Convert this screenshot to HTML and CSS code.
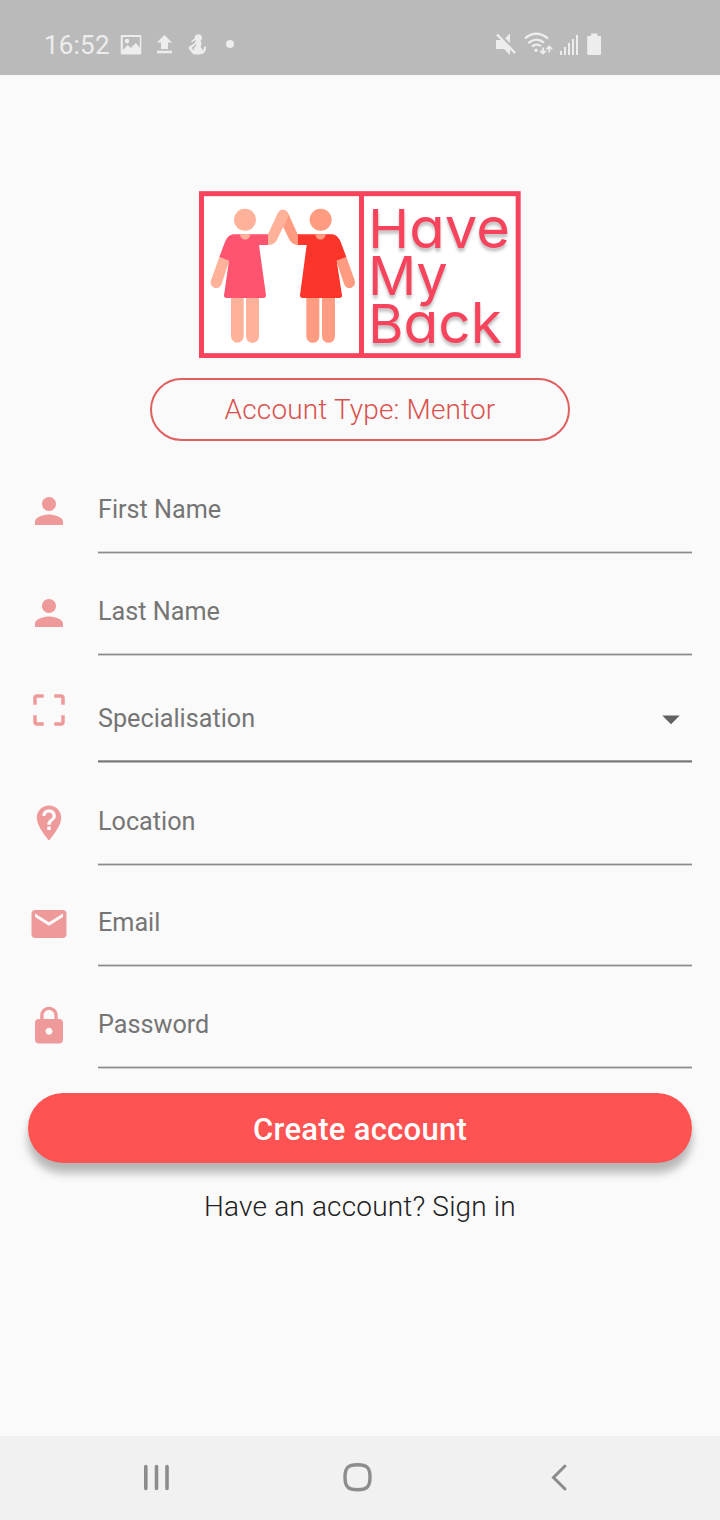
FILE: index.html
```html
<!DOCTYPE html>
<html lang="en">
<head>
  <meta charset="UTF-8" />
  <meta name="viewport" content="width=device-width, initial-scale=1.0"/>
  <title>Have My Back - Create account</title>
  <link rel="stylesheet" href="styles.css">
</head>
<body>
  <div class="screen">
    <header class="status-bar">
      <div class="status-left">
        <span class="time">16:52</span>
        <svg class="notifications" width="116" height="24" viewBox="0 0 116 24">
          <path fill-rule="evenodd" d="M2 3h18q1.300 0 1.300 1.300v17q0 1.300-1.300 1.300H2q-1.300 0-1.300-1.300v-17Q.7 3 2 3zm.8 2v13l5-5 3 3 5-5 4 4.500V5zM7 6.800a2.300 2.300 0 1 1 0 4.600 2.300 2.300 0 0 1 0-4.600z"/>
          <path d="M44.500 3l7.500 7.500h-4V17h-7v-6.500h-4zM37 18.800h15v2.400H37z"/>
          <circle cx="78.300" cy="5.800" r="3.600"/>
          <path d="M75.500 9q3-1 5.500.5 1.500 3-.4 5.500 2 1.500 1.400 3.800 2-.8 2.200-4.300h1.800q.5 8-7.500 8h-3.500q-2.500-.4-3.500-2.300l-3-4 .7-1.700 5.300-3.200.8 1.600-3.500 2.700 1.700 3.200q.3-3.500 3-5.500L74.500 11z"/>
          <path d="M71 9.300l4.500-3.500 1 1.500-4.500 3z"/>
          <circle cx="110" cy="12" r="4"/>
        </svg>
      </div>
      <svg class="system" width="108" height="26" viewBox="0 0 108 26">
        <path d="M1 9h5.500l8.500 9v6l-6-6H1zM15 2.500v9.500l-4.800-4.800z"/>
        <path class="line" stroke-width="2.400" d="M2 3.500l18 18.500"/>
        <path class="line" stroke-width="2.300" d="M30 7.500Q41-2 53 7.500M33.300 12q8-6.500 15.700-.3M37 15.500q4.500-3.500 9-.5"/>
        <circle cx="41" cy="19.200" r="1.700"/>
        <path class="line" stroke-width="1.800" d="M48 16.500v6m-2.800-2.800L48 22.500l2.800-2.800M54.300 21.500v-6M51.500 18.200l2.800-2.800 2.800 2.800"/>
        <path d="M65 20h2v4h-2zM69 16h2v8h-2zM73 12h2v12h-2zM77 8h2v16h-2zM81 4h2v20h-2z"/>
        <path d="M96 2.500h6.500V5h3.500v18q0 1-1 1H93.200q-1 0-1-1V5H96z"/>
      </svg>
    </header>

    <main class="content">
      <svg class="logo" viewBox="27 18 966 501">
        <rect class="logo-frame" x="34.500" y="26" width="950" height="486"/>
        <path class="logo-frame" d="M514.500 26v486"/>
        <g fill="#ff9b80">
          <circle cx="392" cy="104" r="33"/>
          <path d="M349 330h39v124a19.500 19.500 0 0 1-39 0zM396 330h39v124a19.500 19.500 0 0 1-39 0z"/>
          <path d="M469 216l25 70a16 16 0 0 1-31 13l-24-72z"/>
          <path d="M326 148h-3l-28-62q-7-13-18-12l-6 34 28 58q8 14 27 14z"/>
        </g>
        <path fill="#fb3529" d="M428 148H324v32h26l-20 151q0 8 8 8h110q9 0 8-8l-16-104 29-11-18-48q-9-18-23-20z"/>
        <path fill="#ff9b80" d="M376 148h31a15.500 15.500 0 0 1-31 0z"/>
        <g fill="#ffb199">
          <circle cx="165" cy="104" r="33"/>
          <path d="M123 330h38v124a19 19 0 0 1-38 0zM168 330h39v124a19.500 19.500 0 0 1-39 0z"/>
          <path d="M88 216L63 286a16 16 0 0 0 31 13l24-72z"/>
          <path d="M232 148h2l28-61q6-14 19-13 19 5 12 24l-34 70q-8 12-27 12z"/>
        </g>
        <path fill="#ff5470" d="M130 148H234v32h-27l21 151q0 8-8 8H110q-9 0-8-8l15-104-29-11 18-48q8-18 24-20z"/>
        <path fill="#ffb199" d="M150 148h31a15.500 15.500 0 0 1-31 0z"/>
        <g class="logo-text">
          <text x="535" y="188" textLength="425" lengthAdjust="spacingAndGlyphs">H<tspan class="lower">ave</tspan></text>
          <text x="535" y="330" textLength="238" lengthAdjust="spacingAndGlyphs">M<tspan class="lower">y</tspan></text>
          <text x="535" y="473" textLength="401" lengthAdjust="spacingAndGlyphs">B<tspan class="lower">ack</tspan></text>
        </g>
      </svg>

      <div class="account-type">Account Type: Mentor</div>

      <form class="form">
        <label class="field">
          <svg class="icon" viewBox="0 0 24 24"><path d="M12 12c2.210 0 4-1.790 4-4s-1.790-4-4-4-4 1.790-4 4 1.790 4 4 4zm0 2c-2.670 0-8 1.340-8 4v2h16v-2c0-2.660-5.330-4-8-4z"/></svg>
          <span class="input">First Name</span>
        </label>
        <label class="field">
          <svg class="icon" viewBox="0 0 24 24"><path d="M12 12c2.210 0 4-1.790 4-4s-1.790-4-4-4-4 1.790-4 4 1.790 4 4 4zm0 2c-2.670 0-8 1.340-8 4v2h16v-2c0-2.660-5.330-4-8-4z"/></svg>
          <span class="input">Last Name</span>
        </label>
        <label class="field field-select">
          <svg class="icon" viewBox="0 0 24 24"><path d="M3 5v4h2V5h4V3H5c-1.100 0-2 .9-2 2zm2 10H3v4c0 1.100.9 2 2 2h4v-2H5v-4zm14 4h-4v2h4c1.100 0 2-.9 2-2v-4h-2v4zm0-16h-4v2h4v4h2V5c0-1.100-.9-2-2-2z"/></svg>
          <span class="input">Specialisation
            <svg class="arrow" viewBox="0 0 24 24"><path d="M7 10l5 5 5-5z"/></svg>
          </span>
        </label>
        <label class="field field-location">
          <svg class="icon" viewBox="0 0 24 24"><path fill-rule="evenodd" d="M12 2C8.140 2 5 5.140 5 9c0 5.250 7 13 7 13s7-7.750 7-13c0-3.860-3.140-7-7-7zm1 14h-2v-2h2v2zm0-3h-2c0-3.250 3-3 3-5 0-1.100-.9-2-2-2s-2 .9-2 2H8.200c0-2.210 1.700-3.800 3.800-3.800s3.900 1.590 3.900 3.800c0 2.500-2.900 2.750-2.900 5z"/></svg>
          <span class="input">Location</span>
        </label>
        <label class="field field-email">
          <svg class="icon" viewBox="0 0 24 24"><path d="M20 4H4c-1.100 0-1.990.9-1.990 2L2 18c0 1.100.9 2 2 2h16c1.100 0 2-.9 2-2V6c0-1.100-.9-2-2-2zm0 4l-8 5-8-5V6l8 5 8-5v2z"/></svg>
          <span class="input">Email</span>
        </label>
        <label class="field">
          <svg class="icon" viewBox="0 0 24 24"><path d="M18 8h-1V6c0-2.760-2.240-5-5-5S7 3.240 7 6v2H6c-1.100 0-2 .9-2 2v10c0 1.100.9 2 2 2h12c1.100 0 2-.9 2-2V10c0-1.100-.9-2-2-2zm-6 9c-1.100 0-2-.9-2-2s.9-2 2-2 2 .9 2 2-.9 2-2 2zm3.100-9H8.900V6c0-1.710 1.390-3.100 3.100-3.100s3.100 1.390 3.100 3.100v2z"/></svg>
          <span class="input">Password</span>
        </label>
        <button class="submit" type="button">Create account</button>
      </form>
      <p class="sign-in">Have an account? Sign in</p>
    </main>

    <nav class="nav-bar">
      <svg width="28" height="30" viewBox="0 0 28 30"><path stroke-width="3.600" d="M3.800 4.500v22M14.500 4.500v22M25 4.500v22"/></svg>
      <svg width="30" height="30" viewBox="0 0 30 30"><path stroke-width="3.400" d="M15.500 2.700c9.500 0 12.500 3 12.500 12.500s-3 12.500-12.500 12.500S3 24.700 3 15.200 6 2.700 15.500 2.700z"/></svg>
      <svg width="18" height="30" viewBox="0 0 18 30"><path stroke-width="3" d="M15 4L3.500 15.500 15 27"/></svg>
    </nav>
  </div>
</body>
</html>
```
FILE: styles.css
```css
* {
  box-sizing: border-box;
  margin: 0;
  padding: 0;
}
body {
  font-family: Roboto, sans-serif;
  background: #fafafa;
  color: #212121;
}
.screen {
  display: flex;
  flex-direction: column;
  width: 720px;
  height: 1520px;
}
.status-bar {
  display: flex;
  justify-content: space-between;
  align-items: flex-start;
  height: 75px;
  padding: 30px 117px 0 44px;
  background: #bababa;
  color: #ededed;
  fill: #ededed;
}
.status-left {
  display: flex;
}
.time {
  width: 76px;
  font-size: 26px;
  line-height: 31px;
  letter-spacing: 0.2px;
}
.notifications {
  margin-top: 2px;
}
.system {
  margin-top: 1px;
}
.line {
  fill: none;
  stroke: #ededed;
}
.content {
  flex: 1;
  display: flex;
  flex-direction: column;
  align-items: center;
  padding: 116px 28px 0;
}
.logo {
  width: 322px;
  height: 167px;
  background: #fff;
}
.logo-frame {
  fill: none;
  stroke: #f7435c;
  stroke-width: 15;
}
.logo-text {
  font-family: Inter, sans-serif;
  font-size: 159px;
  font-feature-settings: "cv11";
  fill: #f7435c;
  filter: drop-shadow(0 10px 5px rgba(0, 0, 0, 0.25));
}
.lower {
  font-size: 168px;
}
.account-type {
  width: 420px;
  height: 63px;
  margin-top: 20px;
  border: 2px solid #e0605f;
  border-radius: 32px;
  color: #d9534f;
  font-size: 28px;
  font-weight: 300;
  line-height: 59px;
  letter-spacing: 0.15px;
  text-align: center;
}
.form {
  width: 100%;
  margin-top: 11px;
}
.field {
  display: flex;
  align-items: flex-end;
  gap: 28px;
  height: 102px;
}
.field-select {
  height: 107px;
}
.field-location {
  height: 103px;
}
.field-email {
  height: 101px;
}
.icon {
  width: 42px;
  height: 42px;
  margin-bottom: 22px;
  fill: #ef9a9a;
}
.field-select .icon {
  margin-bottom: 32px;
}
.input {
  flex: 1;
  display: flex;
  justify-content: space-between;
  height: 60px;
  padding-top: 1px;
  color: #757575;
  font-size: 25.2px;
  line-height: 30px;
  background: linear-gradient(#d0d0d0 1px, #8c8c8c 1px, #8c8c8c 2px, #d0d0d0 2px) bottom / 100% 3px no-repeat;
}
.field-select .input {
  background-image: linear-gradient(#a0a0a0 1px, #757575 1px, #757575 2px, #b8b8b8 2px);
}
.arrow {
  width: 42px;
  height: 42px;
  margin-top: -6px;
  fill: #616161;
}
.submit {
  display: block;
  width: 100%;
  height: 70px;
  margin-top: 24px;
  padding-top: 2px;
  border: none;
  border-radius: 35px;
  background: #ff5252;
  box-shadow: 0 10px 10px rgba(0, 0, 0, 0.28);
  color: #fff;
  font-family: inherit;
  font-size: 31px;
  font-weight: 500;
  letter-spacing: 0.27px;
}
.sign-in {
  margin-top: 27px;
  font-size: 28px;
  font-weight: 300;
  line-height: 34px;
  letter-spacing: 0.17px;
}
.nav-bar {
  display: grid;
  grid-template-columns: 28px 30px 18px;
  column-gap: 172px;
  align-items: center;
  height: 84px;
  padding: 0 0 2px 142px;
  background: #f1f1f1;
  fill: none;
  stroke: #8c8c8c;
  stroke-linecap: round;
}
.nav-bar svg:last-child {
  margin-left: 6px;
}
```
